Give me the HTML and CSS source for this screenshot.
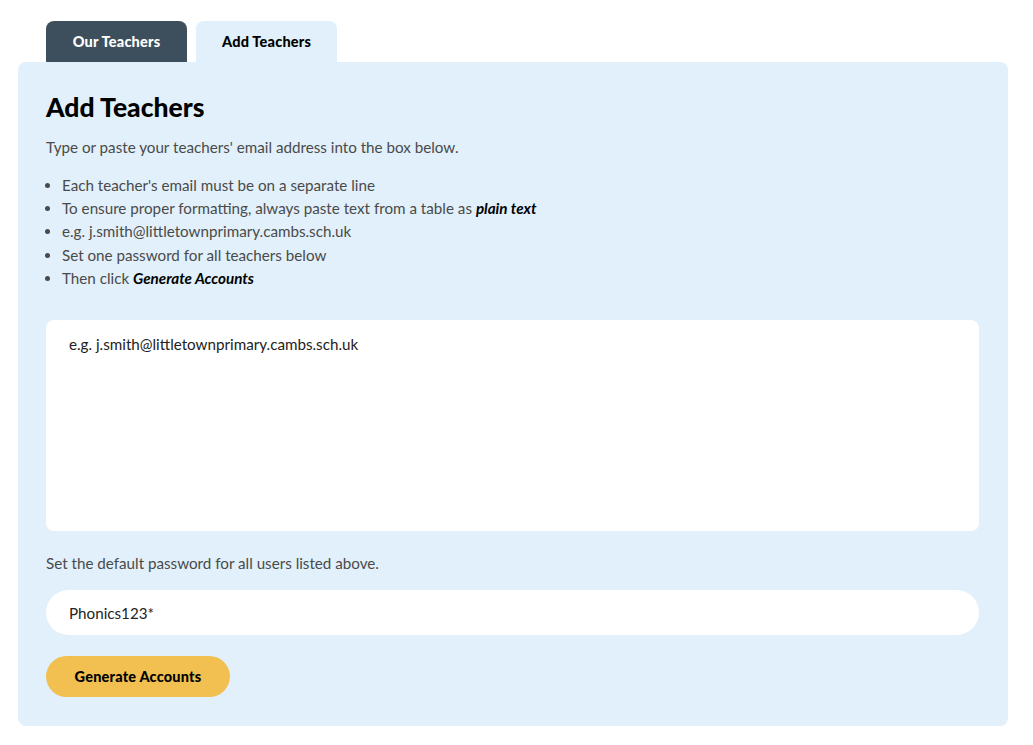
FILE: index.html
```html
<!DOCTYPE html>
<html lang="en">
<head>
<meta charset="UTF-8">
<meta name="viewport"content="width=device-width,initial-scale=1.0">
<title>Add Teachers</title>
<link rel="stylesheet" href="styles.css">
</head>
<body>
<div class="wrap">
<div class="tabs">
<div class="tab tab-dark">Our Teachers</div>
<div class="tab tab-active">Add Teachers</div>
</div>
<div class="panel">
<h1>Add Teachers</h1>
<p class="intro">Type or paste your teachers' email address into the box below.</p>
<ul class="rules">
<li>Each teacher's email must be on a separate line</li>
<li>To ensure proper formatting, always paste text from a table as <b><i>plain text</i></b></li>
<li>e.g. j.smith@littletownprimary.cambs.sch.uk</li>
<li>Set one password for all teachers below</li>
<li>Then click <b><i>Generate Accounts</i></b></li>
</ul>
<textarea class="emails"placeholder="e.g. j.smith@littletownprimary.cambs.sch.uk"></textarea>
<p class="note">Set the default password for all users listed above.</p>
<input type="text"class="password"value="Phonics123*">
<button class="generate">Generate Accounts</button>
</div>
</div>
</body>
</html>
```
FILE: styles.css
```css
body{
margin:0;
background:#ffffff;
font-family:Lato,"Noto Sans",sans-serif;
color:#4a4a4a;
}
.wrap{
padding:21px 25px 19px 18px;
}
.tabs{
display:flex;
gap:9px;
padding-left:28px;
}
.tab{
width:141px;
height:41px;
display:flex;
align-items:center;
justify-content:center;
border-radius:8px 8px 0 0;
font-weight:900;
font-size:14.5px;
letter-spacing:0.2px;
}
.tab-dark{
background:#3d4f5c;
color:#ffffff;
}
.tab-active{
background:#e1f0fa;
color:#000000;
}
.panel{
background:#e1f0fa;
border-radius:8px;
padding:29px 29px 29px 28px;
}
h1{
margin:0 0 14px 0;
font-size:26.5px;
line-height:32px;
font-weight:900;
color:#000000;
}
.intro{
margin:0 0 17px 0;
font-size:15.2px;
line-height:20px;
}
.rules{
margin:0 0 30px 0;
padding-left:16px;
font-size:15.2px;
line-height:23.2px;
}
.rules b{
color:#000000;
}
.emails{
display:block;
box-sizing:border-box;
width:100%;
height:211px;
border:none;
border-radius:8px;
background:#ffffff;
padding:14px 23px;
font-family:inherit;
font-size:15.2px;
line-height:20px;
resize:none;
}
.emails::placeholder{
color:#222222;
}
.note{
margin:22px 0 17px 0;
font-size:15.2px;
line-height:20px;
}
.password{
display:block;
box-sizing:border-box;
width:100%;
height:45px;
border:none;
border-radius:23px;
background:#ffffff;
padding:0 23px;
font-family:inherit;
font-size:15.2px;
color:#222222;
}
.generate{
display:block;
margin-top:21px;
width:184px;
height:41px;
border:none;
border-radius:21px;
background:#f2c051;
font-family:inherit;
font-weight:900;
font-size:14.5px;
letter-spacing:0.2px;
color:#000000;
cursor:pointer;
}
```
